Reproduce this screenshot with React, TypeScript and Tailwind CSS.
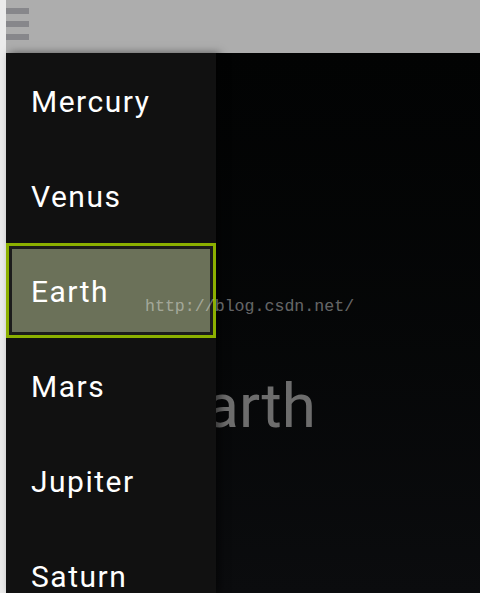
const planets = ['Mercury', 'Venus', 'Earth', 'Mars', 'Jupiter', 'Saturn']

function MenuItem({ name, selected }: { name: string; selected: boolean }) {
  if (selected) {
    return (
      <div className="h-[95px] border-[3px] border-[#8cb000]">
        <div className="h-full border-[3px] border-[#1c1c1c] bg-[#6b7159] flex items-center pl-[19px] pt-[2px]">
          <span className="text-[30px] tracking-[1.5px] text-white">{name}</span>
        </div>
      </div>
    )
  }
  return (
    <div className="h-[95px] flex items-center pl-[25px] pt-[2px]">
      <span className="text-[30px] tracking-[1.5px] text-white">{name}</span>
    </div>
  )
}

export default function App() {
  return (
    <div className="w-[480px] h-[593px] flex overflow-hidden font-['Roboto',sans-serif]">
      <div className="w-[6px] bg-[#ebebeb]" />
      <div className="flex-1 flex flex-col">
        <div className="h-[53px] bg-[#adadad] flex flex-col gap-[7px] pt-[8px]">
          <div className="w-[23px] h-[6px] bg-[#87878b]" />
          <div className="w-[23px] h-[6px] bg-[#87878b]" />
          <div className="w-[23px] h-[6px] bg-[#87878b]" />
        </div>
        <div className="relative flex-1 bg-gradient-to-b from-[#020303] to-[#0b0c0e]">
          <div className="flex justify-center pt-[322px]">
            <span className="text-[62px] leading-none text-[#6d6d6d]">Earth</span>
          </div>
          {/* drawer over the content */}
          <div className="absolute left-0 top-0 bottom-0 w-[210px] bg-[#111111] shadow-[4px_0_8px_rgba(0,0,0,0.5)]">
            {planets.map((p) => (
              <MenuItem key={p} name={p} selected={p === 'Earth'} />
            ))}
          </div>
          <div className="absolute left-[139px] top-[246px] text-[16.6px] leading-none font-['Liberation_Mono',monospace] text-white/40">
            http://blog.csdn.net/
          </div>
        </div>
      </div>
    </div>
  )
}
